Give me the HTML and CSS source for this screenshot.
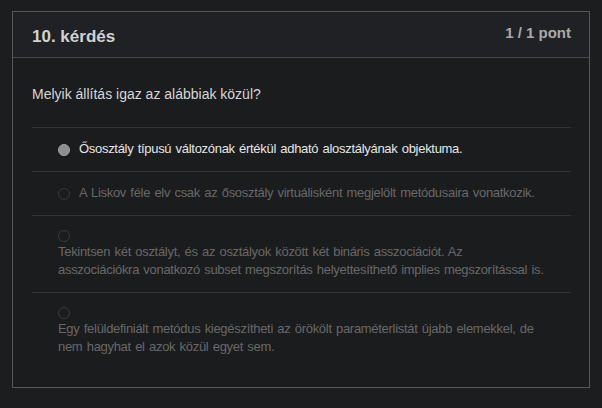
FILE: index.html
```html
<!DOCTYPE html>
<html lang="hu">
<head>
<meta charset="utf-8">
<title>10. kérdés</title>
<link rel="stylesheet" href="styles.css">
</head>
<body>
<div class="card">
  <div class="card-header">
    <h2 class="title">10. kérdés</h2>
    <span class="points">1 / 1 pont</span>
  </div>
  <div class="card-body">
    <p class="question">Melyik állítás igaz az alábbiak közül?</p>
    <ul class="options">
      <li class="option selected"><span class="radio"></span><span class="label">Ősosztály típusú változónak értékül adható alosztályának objektuma.</span></li>
      <li class="option"><span class="radio"></span><span class="label">A Liskov féle elv csak az ősosztály virtuálisként megjelölt metódusaira vonatkozik.</span></li>
      <li class="option"><span class="radio"></span><span class="label">Tekintsen két osztályt, és az osztályok között két bináris asszociációt. Az asszociációkra vonatkozó subset megszorítás helyettesíthető implies megszorítással is.</span></li>
      <li class="option"><span class="radio"></span><span class="label">Egy felüldefiniált metódus kiegészítheti az örökölt paraméterlistát újabb elemekkel, de nem hagyhat el azok közül egyet sem.</span></li>
    </ul>
  </div>
</div>
</body>
</html>
```
FILE: styles.css
```css
html, body {
  background: #1c1d1f;
}
body {
  margin: 11px 12px;
  font-family: "Liberation Sans", Arial, sans-serif;
  font-size: 14px;
  line-height: 18px;
}
.card {
  border: 1px solid #575757;
  background: #1b1c1e;
}
.card-header {
  display: flex;
  justify-content: space-between;
  align-items: flex-start;
  padding: 11px 18px 10px 19px;
  background: #202124;
  border-bottom: 1px solid #4a4a4a;
}
.title {
  margin: 4px 0 0;
  font-size: 17px;
  line-height: 20px;
  font-weight: bold;
  color: #d2d2d2;
}
.points {
  font-size: 15px;
  line-height: 20px;
  font-weight: bold;
  color: #a9a9a9;
}
.card-body {
  padding: 27px 18px 18px 19px;
}
.question {
  margin: 0 0 24px;
  color: #d6d6d6;
}
.options {
  list-style: none;
  margin: 0;
  padding: 0;
}
.option {
  display: flex;
  flex-wrap: wrap;
  align-items: center;
  padding: 12px 25px 13px 26px;
  border-top: 1px solid #333436;
  color: #686868;
  font-size: 13px;
  letter-spacing: -0.3px;
  word-spacing: 1px;
}
.radio {
  box-sizing: border-box;
  width: 12px;
  height: 12px;
  margin: 2px 9px 1px 0;
  border-radius: 50%;
  border: 1px solid #38393b;
}
.option.selected {
  color: #e6e6e6;
}
.option.selected .radio {
  background: #8d8d92;
  border-color: #a2a2a7;
}
```
